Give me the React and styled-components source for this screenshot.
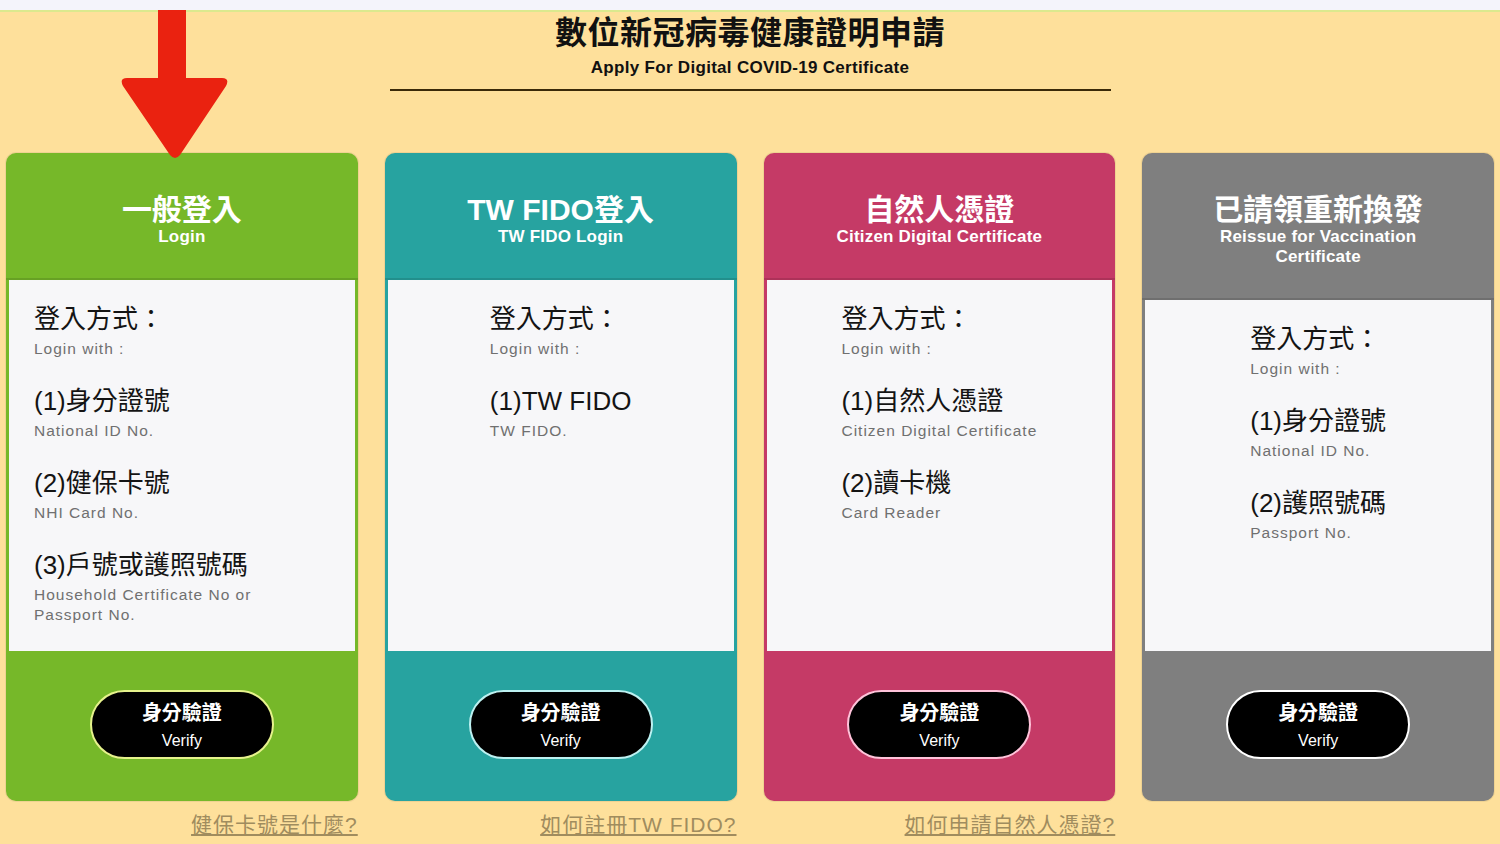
import React from "react";
import styled, { createGlobalStyle } from "styled-components";

const GlobalStyle = createGlobalStyle`
  body {
    margin: 0;
    background: #fee09b;
    font-family: "Liberation Sans", "Noto Sans CJK TC", sans-serif;
  }
`;

const Page = styled.div`
  position: relative;
  width: 1500px;
  height: 844px;
  overflow: hidden;
  background: #fee09b;
`;

const TopStrip = styled.div`
  height: 10px;
  background: #f4f4fb;
  border-bottom: 2px solid #dbe98e;
`;

const Heading = styled.header`
  display: flex;
  flex-direction: column;
  align-items: center;
  padding-top: 1px;
`;

const Title = styled.h1`
  margin: 0;
  font-size: 32px;
  line-height: 40px;
  font-weight: 700;
  color: #111;
  letter-spacing: 0.5px;
`;

const Subtitle = styled.div`
  margin-top: 5px;
  font-size: 17px;
  line-height: 20px;
  font-weight: 700;
  letter-spacing: 0.3px;
  color: #111;
`;

const Rule = styled.hr`
  width: 721px;
  margin: 11px 0 0;
  border: 0;
  border-top: 2px solid #3b2a08;
`;

const Grid = styled.div`
  display: grid;
  grid-template-columns: repeat(4, 1fr);
  column-gap: 27px;
  padding: 0 6px;
`;

const Cards = styled(Grid)`
  margin-top: 62px;
`;

const Card = styled.section`
  display: flex;
  flex-direction: column;
  height: 648px;
  border-radius: 10px;
  overflow: hidden;
  background: ${({ $color }) => $color};
  box-shadow: 0 0 0 1px rgba(0, 0, 0, 0.06);
`;

const CardHead = styled.div`
  padding: 40px 56px 31px;
  text-align: center;
  color: #fff;
  border-bottom: 2px solid rgba(0, 0, 0, 0.12);
`;

const CardTitle = styled.div`
  font-size: 30px;
  line-height: 34px;
  font-weight: 700;
`;

const CardSub = styled.div`
  font-size: 17px;
  line-height: 20px;
  font-weight: 700;
  letter-spacing: 0.2px;
`;

const CardBody = styled.div`
  flex: 1;
  min-height: 0;
  overflow: hidden;
  margin: 0 3px;
  padding: 24px 25px;
  background: #f7f7f9;
`;

const Methods = styled.div`
  width: ${({ $wide }) => ($wide ? "100%" : "fit-content")};
  margin: 0 auto;
  display: flex;
  flex-direction: column;
  gap: 27px;
`;

const Method = styled.div`
  display: flex;
  flex-direction: column;
`;

const MethodMain = styled.div`
  font-size: 26px;
  line-height: 30px;
  color: #141414;
  margin-bottom: 5px;
`;

const MethodSub = styled.div`
  max-width: 240px;
  font-size: 15.5px;
  line-height: 20px;
  letter-spacing: 1px;
  color: #707070;
`;

const CardFoot = styled.div`
  height: 150px;
  flex: none;
  display: flex;
  justify-content: center;
  padding-top: 39px;
  box-sizing: border-box;
`;

const VerifyButton = styled.button`
  width: 184px;
  height: 69px;
  padding-top: 3px;
  border-radius: 35px;
  border: 2px solid ${({ $ring }) => $ring};
  background: #000;
  color: #fff;
  font-family: inherit;
  display: flex;
  flex-direction: column;
  align-items: center;
  justify-content: center;
  cursor: pointer;

  strong {
    font-size: 20px;
    line-height: 26px;
  }
  span {
    font-size: 16px;
    line-height: 22px;
    margin-top: 4px;
  }
`;

const Links = styled(Grid)`
  margin-top: 11px;
`;

const HelpLink = styled.a`
  justify-self: end;
  font-size: 21px;
  line-height: 26px;
  letter-spacing: 1px;
  color: #a08c5e;
  text-decoration: underline;
`;

const Arrow = styled.svg`
  position: absolute;
  left: 118px;
  top: 10px;
`;

const cards = [
  {
    color: "#76b829",
    ring: "#e6f28c",
    title: "一般登入",
    sub: "Login",
    wide: true,
    methods: [
      ["登入方式：", "Login with :"],
      ["(1)身分證號", "National ID No."],
      ["(2)健保卡號", "NHI Card No."],
      ["(3)戶號或護照號碼", "Household Certificate No or Passport No."],
    ],
    help: "健保卡號是什麼?",
  },
  {
    color: "#27a3a0",
    ring: "#bdf1f1",
    title: "TW FIDO登入",
    sub: "TW FIDO Login",
    methods: [
      ["登入方式：", "Login with :"],
      ["(1)TW FIDO", "TW FIDO."],
    ],
    help: "如何註冊TW FIDO?",
  },
  {
    color: "#c53a66",
    ring: "#ffc3da",
    title: "自然人憑證",
    sub: "Citizen Digital Certificate",
    methods: [
      ["登入方式：", "Login with :"],
      ["(1)自然人憑證", "Citizen Digital Certificate"],
      ["(2)讀卡機", "Card Reader"],
    ],
    help: "如何申請自然人憑證?",
  },
  {
    color: "#7f7f7f",
    ring: "#ffffff",
    title: "已請領重新換發",
    sub: "Reissue for Vaccination Certificate",
    methods: [
      ["登入方式：", "Login with :"],
      ["(1)身分證號", "National ID No."],
      ["(2)護照號碼", "Passport No."],
    ],
    help: null,
  },
];

export default function App() {
  return (
    <Page>
      <GlobalStyle />
      <TopStrip />
      <Heading>
        <Title>數位新冠病毒健康證明申請</Title>
        <Subtitle>Apply For Digital COVID-19 Certificate</Subtitle>
        <Rule />
      </Heading>

      <Cards>
        {cards.map((c) => (
          <Card key={c.title} $color={c.color}>
            <CardHead>
              <CardTitle>{c.title}</CardTitle>
              <CardSub>{c.sub}</CardSub>
            </CardHead>
            <CardBody>
              <Methods $wide={c.wide}>
                {c.methods.map(([main, sub]) => (
                  <Method key={main}>
                    <MethodMain>{main}</MethodMain>
                    <MethodSub>{sub}</MethodSub>
                  </Method>
                ))}
              </Methods>
            </CardBody>
            <CardFoot>
              <VerifyButton $ring={c.ring}>
                <strong>身分驗證</strong>
                <span>Verify</span>
              </VerifyButton>
            </CardFoot>
          </Card>
        ))}
      </Cards>

      <Links>
        {cards.map((c) =>
          c.help ? (
            <HelpLink key={c.title} href="#">
              {c.help}
            </HelpLink>
          ) : (
            <span key={c.title} />
          )
        )}
      </Links>

      <Arrow width="112" height="150" viewBox="0 0 112 150">
        <path
          d="M40 0 H68 V68 H104 Q112 68 108 76 L62 145 Q57 151 52 145 L5 76 Q1 68 9 68 H40 Z"
          fill="#ea2210"
        />
      </Arrow>
    </Page>
  );
}
